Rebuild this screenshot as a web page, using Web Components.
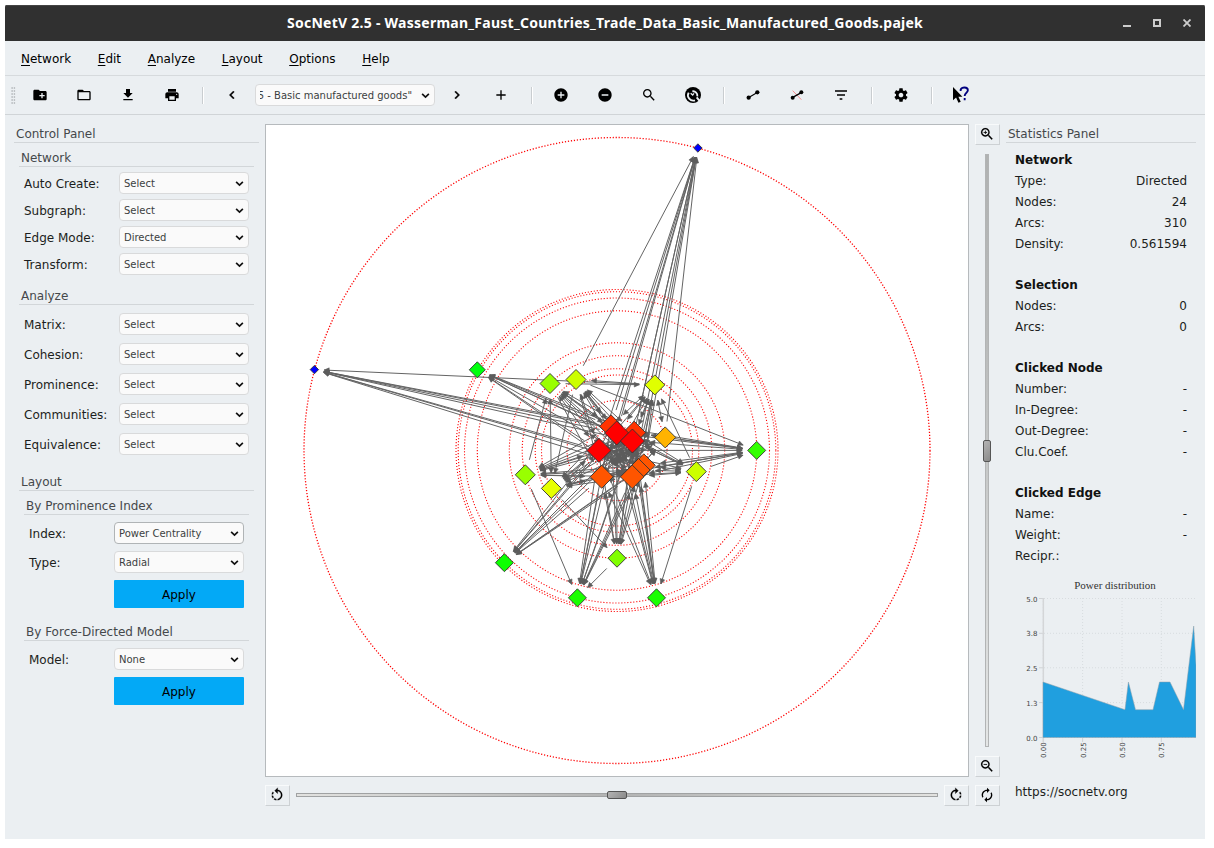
<!DOCTYPE html>
<html lang="en">
<head>
<meta charset="utf-8">
<title>SocNetV 2.5</title>
<style>
html,body{margin:0;background:#fff;}
body{padding:5px;width:1200px;font:12px "DejaVu Sans",sans-serif;color:#1c1e20;}
</style>
</head>
<body>
<snv-window></snv-window>
<script>
const define = (name, html, setup) => customElements.define(name, class extends HTMLElement {
  connectedCallback() {
    if (this.shadowRoot) return;
    const root = this.attachShadow({mode: 'open'});
    const t = document.createElement('template');
    t.innerHTML = html;
    root.append(t.content.cloneNode(true));
    if (setup) setup(this, root);
  }
});

const ICONS = {
  newfolder: '<path d="M20 6h-8l-2-2H4c-1.1 0-2 .9-2 2v12c0 1.1.9 2 2 2h16c1.1 0 2-.9 2-2V8c0-1.1-.9-2-2-2zm-1 8h-3v3h-2v-3h-3v-2h3V9h2v3h3v2z"/>',
  folder: '<path d="M20 6h-8l-2-2H4c-1.1 0-2 .9-2 2v12c0 1.1.9 2 2 2h16c1.1 0 2-.9 2-2V8c0-1.1-.9-2-2-2zm0 12H4V8h16v10z"/>',
  download: '<path d="M19 9h-4V3H9v6H5l7 7 7-7zM5 18v2h14v-2H5z"/>',
  print: '<path d="M19 8H5c-1.66 0-3 1.34-3 3v6h4v4h12v-4h4v-6c0-1.66-1.34-3-3-3zm-3 11H8v-5h8v5zm3-7c-.55 0-1-.45-1-1s.45-1 1-1 1 .45 1 1-.45 1-1 1zm-1-9H6v4h12V3z"/>',
  left: '<path d="M15.41 7.41L14 6l-6 6 6 6 1.41-1.41L10.83 12z" stroke="#000" stroke-width=".6"/>',
  right: '<path d="M10 6L8.59 7.41 13.17 12l-4.58 4.59L10 18l6-6z" stroke="#000" stroke-width=".6"/>',
  plus: '<path d="M19 13h-6v6h-2v-6H5v-2h6V5h2v6h6v2z"/>',
  addc: '<path d="M12 2C6.48 2 2 6.48 2 12s4.48 10 10 10 10-4.48 10-10S17.52 2 12 2zm5 11h-4v4h-2v-4H7v-2h4V7h2v4h4v2z"/>',
  remc: '<path d="M12 2C6.48 2 2 6.48 2 12s4.48 10 10 10 10-4.48 10-10S17.52 2 12 2zm5 11H7v-2h10v2z"/>',
  search: '<path d="M15.5 14h-.79l-.28-.27C15.41 12.59 16 11.11 16 9.5 16 5.91 13.09 3 9.5 3S3 5.91 3 9.5 5.91 16 9.5 16c1.61 0 3.09-.59 4.23-1.57l.27.28v.79l5 4.99L20.49 19l-4.99-5zm-6 0C7.01 14 5 11.99 5 9.5S7.01 5 9.5 5 14 7.01 14 9.5 11.99 14 9.5 14z"/>',
  wrench: '<circle cx="12" cy="12" r="12"/><path d="M15 20A8 8 0 0 1 5.500 8.500M11 6.500A6.500 6.500 0 0 1 18.500 14M17.500 15.500L22.500 21.500" fill="none" stroke="#ebeff2" stroke-width="2.800"/><path d="M8.500 9.500l3 2.500 2-2.500" fill="none" stroke="#ebeff2" stroke-width="2"/>',
  edge: '<circle cx="5.500" cy="16" r="3.200"/><circle cx="18.500" cy="8" r="3.200"/><path d="M5 16L19 8" stroke="#000" stroke-width="1.800"/>',
  noedge: '<path d="M5.500 5.500L18.500 19" stroke="#f33" stroke-width=".8"/><circle cx="5.500" cy="16" r="3"/><circle cx="18.500" cy="8" r="3"/><path d="M5 16L19 8" stroke="#000" stroke-width="1.900"/>',
  filter: '<path d="M3 5h18v2H3zM6 11h12v2H6zM10 17h4v2h-4z"/>',
  gear: '<path d="M19.430 12.980c.04-.32.07-.64.07-.98s-.03-.66-.07-.98l2.110-1.650c.19-.15.24-.42.12-.64l-2-3.460c-.12-.22-.39-.3-.61-.22l-2.490 1c-.52-.4-1.080-.73-1.690-.98l-.38-2.650C14.460 2.180 14.250 2 14 2h-4c-.25 0-.46.18-.49.42l-.38 2.650c-.61.25-1.170.59-1.690.98l-2.490-1c-.23-.09-.49 0-.61.22l-2 3.460c-.13.22-.07.49.12.64l2.110 1.650c-.04.32-.07.65-.07.98s.03.66.07.98l-2.110 1.650c-.19.15-.24.42-.12.64l2 3.460c.12.22.39.3.61.22l2.490-1c.52.4 1.080.73 1.690.98l.38 2.650c.03.24.24.42.49.42h4c.25 0 .46-.18.49-.42l.38-2.650c.61-.25 1.170-.59 1.690-.98l2.490 1c.23.09.49 0 .61-.22l2-3.460c.12-.22.07-.49-.12-.64l-2.110-1.650zM12 15.500c-1.930 0-3.500-1.570-3.500-3.500s1.570-3.500 3.500-3.500 3.500 1.570 3.500 3.500-1.570 3.500-3.500 3.500z"/>',
  help: '<path d="M0 0v20l4.600-4.400L8.200 23.500l3.400-1.500-3.500-7.500h6z"/><path d="M11.500 6V3.800C12.500 1.500 15 .8 17.300 .8c3 0 5 1.500 5 4.200 0 3.800-4.800 3.500-4.800 8.500M17.500 16.500v3.500" fill="none" stroke="#00007f" stroke-width="2.800"/>',
  zoomin: '<path d="M15.500 14h-.79l-.28-.27C15.410 12.590 16 11.110 16 9.500 16 5.910 13.090 3 9.500 3S3 5.910 3 9.500 5.910 16 9.500 16c1.610 0 3.090-.59 4.230-1.570l.27.28v.79l5 4.990L20.490 19l-4.990-5zm-6 0C7.010 14 5 11.990 5 9.500S7.010 5 9.500 5 14 7.010 14 9.500 11.990 14 9.500 14zM12 10h-2v2H9v-2H7V9h2V7h1v2h2v1z" stroke="#000" stroke-width=".2"/>',
  zoomout: '<path d="M15.500 14h-.79l-.28-.27C15.410 12.590 16 11.110 16 9.500 16 5.910 13.090 3 9.500 3S3 5.910 3 9.500 5.910 16 9.500 16c1.610 0 3.090-.59 4.230-1.570l.27.28v.79l5 4.990L20.490 19l-4.990-5zm-6 0C7.010 14 5 11.990 5 9.500S7.010 5 9.500 5 14 7.010 14 9.500 11.990 14 9.500 14zM7 9h5v1H7z" stroke="#000" stroke-width=".2"/>',
  rotr: '<path d="M15.550 5.550L11 1v3.070C7.060 4.560 4 7.920 4 12s3.050 7.440 7 7.930v-2.020c-2.840-.48-5-2.940-5-5.910s2.160-5.430 5-5.910V10l4.550-4.450zM19.930 11c-.17-1.390-.72-2.730-1.620-3.890l-1.420 1.420c.54.75.88 1.600 1.020 2.470h2.020zM13 17.900v2.020c1.390-.17 2.740-.71 3.900-1.610l-1.440-1.440c-.75.54-1.590.89-2.460 1.030zm3.890-2.420l1.420 1.410c.9-1.160 1.450-2.500 1.620-3.890h-2.020c-.14.87-.48 1.720-1.020 2.480z" stroke="#000" stroke-width=".3"/>',
  sync: '<path d="M12 6v3l4-4-4-4v3c-4.420 0-8 3.580-8 8 0 1.570.46 3.030 1.240 4.260L6.700 14.800c-.45-.83-.7-1.790-.7-2.800 0-3.310 2.690-6 6-6zm6.760 1.740L17.300 9.200c.44.84.7 1.790.7 2.800 0 3.310-2.690 6-6 6v-3l-4 4 4 4v-3c4.420 0 8-3.580 8-8 0-1.570-.46-3.030-1.240-4.260z"/>',
  down: '<path d="M3 7.500L12 16l9-8.500" fill="none" stroke="#111" stroke-width="4.500"/>'
};
ICONS.rotl = '<g transform="matrix(-1 0 0 1 24 0)">' + ICONS.rotr + '</g>';

define('snv-icon', `<style>:host{display:block;line-height:0;width:var(--s,16px);height:var(--s,16px)}svg{width:100%;height:100%;overflow:visible}</style><svg viewBox="0 0 24 24"></svg>`,
  (el, r) => { r.querySelector('svg').innerHTML = ICONS[el.getAttribute('name')]; });

define('snv-titlebar', `<style>
:host{display:grid;grid-template-columns:1fr auto 1fr;align-items:center;height:36px;background:#303030;color:#fff;border-radius:2px 2px 0 0;box-shadow:inset 0 1px #444}
b{grid-column:2;font:bold 14px/36px "Noto Sans",sans-serif;white-space:nowrap;letter-spacing:.26px}
div{justify-self:end;display:flex;gap:22px;margin-right:14px}
svg{width:8px;height:8px;display:block}
</style><b>SocNetV 2.5 - Wasserman_Faust_Countries_Trade_Data_Basic_Manufactured_Goods.pajek</b>
<div><svg><path d="M0 7h8" stroke="#ccc" stroke-width="2"/></svg><svg><path d="M1 1h6v6H1z" stroke="#ccc" fill="none" stroke-width="2"/></svg><svg><path d="M.5.5l7 7M7.500.5l-7 7" stroke="#ccc" stroke-width="1.800"/></svg></div>`);

define('snv-menubar', `<style>
:host{display:flex;height:34px;border-bottom:1px solid #d6dadd;padding-left:16px;gap:26.700px;line-height:36px;color:#000}
u{text-underline-offset:2px;text-decoration-thickness:1px}
</style><span><u>N</u>etwork</span><span><u>E</u>dit</span><span><u>A</u>nalyze</span><span><u>L</u>ayout</span><span><u>O</u>ptions</span><span><u>H</u>elp</span>`);

define('snv-tool', `<style>:host{width:44px;height:38px;display:flex;align-items:center;justify-content:center;flex:none}</style><snv-icon></snv-icon>`,
  (el, r) => r.querySelector('snv-icon').replaceWith(Object.assign(document.createElement('template'), {innerHTML: `<snv-icon name="${el.getAttribute('name')}"></snv-icon>`}).content));

define('snv-combo', `<style>
:host{display:flex;align-items:center;justify-content:space-between;box-sizing:border-box;height:22px;border:1px solid #d9dadb;border-radius:4px;background:#fafafa;color:#3c3f41;font-size:10px;line-height:20px;padding:0 4px}
:host([active]){border-color:#b0b4b6}
div{overflow:hidden;white-space:nowrap;flex:1;display:flex;padding-top:1px}
:host([clip]) div{justify-content:flex-end}
snv-icon{--s:9px;flex:none}
:host([clip]) snv-icon{margin-left:9px}
</style><div><slot></slot></div><snv-icon name="down"></snv-icon>`);

define('snv-toolbar', `<style>
:host{display:flex;height:38px;align-items:center;border-bottom:1px solid #d0d4d7}
.grip{width:5px;height:17px;margin:0 2px 0 6px;background:radial-gradient(circle at 1px 1px,#b5b9bc .6px,transparent .9px) 0 0/2.500px 3px}
i{width:16px;height:17px;background:linear-gradient(#c9cdd0,#c9cdd0) 8px 0/1px 100% no-repeat,linear-gradient(#fff,#fff) 9px 0/1px 100% no-repeat}
snv-combo{width:180px;margin-left:1px}
</style><span class="grip"></span>
<snv-tool name="newfolder"></snv-tool><snv-tool name="folder"></snv-tool><snv-tool name="download"></snv-tool><snv-tool name="print"></snv-tool><i></i>
<snv-tool name="left"></snv-tool><snv-combo clip>5 - Basic manufactured goods"</snv-combo><snv-tool name="right"></snv-tool><snv-tool name="plus"></snv-tool><i></i>
<snv-tool name="addc"></snv-tool><snv-tool name="remc"></snv-tool><snv-tool name="search"></snv-tool><snv-tool name="wrench"></snv-tool><i></i>
<snv-tool name="edge"></snv-tool><snv-tool name="noedge"></snv-tool><snv-tool name="filter"></snv-tool><i></i>
<snv-tool name="gear"></snv-tool><i></i><snv-tool name="help"></snv-tool>`);

define('snv-heading', `<style>:host{display:block;height:17px;line-height:18px;border-bottom:1px solid #d2d6d9;padding-left:2px;color:#45484b}</style><slot></slot>`);

define('snv-field', `<style>:host{display:grid;grid-template:22px/1fr 130px;height:22px;line-height:24px}</style><span></span><snv-combo><slot></slot></snv-combo>`,
  (el, r) => { r.querySelector('span').textContent = el.getAttribute('label'); if (el.hasAttribute('active')) r.querySelector('snv-combo').setAttribute('active', ''); });

define('snv-button', `<style>:host{display:block;width:130px;height:28px;line-height:30px;text-align:center;background:#03a9f6;border-radius:1px;color:#000;align-self:flex-end}</style><slot></slot>`);

define('snv-control-panel', `<style>
:host{display:block;padding:10px 6px 0 9px}
.g{margin:6px 5px 0}
.rows{display:flex;flex-direction:column;gap:5px;padding:5px 5px 0}
.a{padding-top:8px;gap:8px}
.l{padding-top:7px;gap:7px}
</style><snv-heading>Control Panel</snv-heading>
<div class="g"><snv-heading>Network</snv-heading><div class="rows">
<snv-field label="Auto Create:">Select</snv-field><snv-field label="Subgraph:">Select</snv-field><snv-field label="Edge Mode:">Directed</snv-field><snv-field label="Transform:">Select</snv-field></div></div>
<div class="g" style="margin-top:12px"><snv-heading>Analyze</snv-heading><div class="rows a">
<snv-field label="Matrix:">Select</snv-field><snv-field label="Cohesion:">Select</snv-field><snv-field label="Prominence:">Select</snv-field><snv-field label="Communities:">Select</snv-field><snv-field label="Equivalence:">Select</snv-field></div></div>
<div class="g" style="margin-top:18px"><snv-heading>Layout</snv-heading>
<div class="g"><snv-heading>By Prominence Index</snv-heading><div class="rows l"><snv-field label="Index:" active>Power Centrality</snv-field><snv-field label="Type:">Radial</snv-field><snv-button>Apply</snv-button></div></div>
<div class="g" style="margin-top:15px"><snv-heading>By Force-Directed Model</snv-heading><div class="rows l"><snv-field label="Model:">None</snv-field><snv-button>Apply</snv-button></div></div></div>`);

define('snv-graph', `<style>:host{display:block;box-sizing:border-box;width:704px;height:653px;border:1px solid #b6babd;background:#fff}svg{display:block}</style><svg width="702" height="651" viewBox="266 125 702 651"></svg>`, (el, r) => {
  const nodes = {
    b1:[697.9,148,4.2,'#0000ff'], b2:[314.4,369.6,4.2,'#0000ff'],
    g1:[477.3,369.8,8,'#00ff0d'], g2:[504.4,562.7,9,'#0dff00'], g3:[577.4,597.8,9,'#1aff00'], g4:[656.500,597.8,9,'#1aff00'], g5:[756.700,450.400,9,'#33ff00'],
    l1:[550,383.500,10,'#99ff00'], l2:[525.300,474.800,10,'#99ff00'], l3:[617,558.200,9,'#80ff00'],
    m1:[576,379.500,10,'#ccff00'], m2:[696.300,471.600,10,'#ccff00'],
    y1:[654.800,384.900,10,'#e0ff00'], y2:[551.400,488.400,10,'#e6ff00'],
    o:[665.200,437.400,10.500,'#ffb300'],
    c1:[611,426.300,11.500,'#ff3300'], c2:[616.700,433,12,'#ff0000'], c3:[634.200,432.700,11.500,'#ff3300'], c4:[632.400,441,12,'#ff0000'],
    c5:[599,450.400,12,'#ff0000'], c6:[601.700,476.800,11.500,'#ff5500'], c7:[643.800,465.300,11.500,'#ff5500'], c8:[638.500,470,11.500,'#ff5500'], c9:[632.200,476.800,11.800,'#ff5500']
  };
  const arcs = [];
  const core = ['c1','c2','c3','c4','c5','c6','c7','c8','c9'];
  const add = (to, from) => from.split(' ').forEach(f => arcs.push([f, to]));
  add('b1', 'c1 c2 c3 c4 c5 c6 c7 c8 c9 o m1');
  add('b2', 'c1 c2 c3 c4 c5 c7 c8 y1');
  add('g1', 'c1 c2 c3 c4 c5 c7 c9');
  add('g2', 'c2 c3 c4 c5 c6 c7 c8 c9 c1');
  add('g3', 'c1 c2 c3 c4 c5 c6 c7 c8 c9 l2 l3');
  add('g4', 'c1 c2 c3 c4 c5 c6 c7 c8 c9 m2');
  add('g5', 'c1 c2 c3 c4 c5 c6 c7 c8 c9 o m1 m2');
  add('l1', 'c1 c2 c3 c4 c5 c7 c8 l2 y2');
  add('l2', 'c1 c2 c3 c4 c5 c6 c7 c9 o');
  add('l3', 'c1 c2 c3 c4 c6 c7 c8 c9 y2');
  add('m1', 'c1 c2 c3 c4 c5 c7 c8 c9 y1 l1');
  add('m2', 'c1 c2 c3 c4 c5 c6 c7 c8 c9');
  add('y1', 'c1 c2 c3 c4 c5 c6 c7 c8 c9 o l1 m2');
  add('y2', 'c1 c2 c3 c4 c5 c6 c7 c8 c9 l1 m1 o');
  add('o', 'c1 c2 c3 c4 c5 c6 c7 c8 c9 y1 y2');
  core.forEach(a => { core.forEach(b => { if (a !== b) arcs.push([a, b]); });
    ['g5','l1','l2','m1','m2','y1','y2','l3','g4'].forEach(p => arcs.push([p, a])); });
  const rings = [313, 161, 158.800, 152.500, 139.700, 107.700, 94.800, 81.800, 75.500, 50, 31, 24, 18];
  let s = rings.map(q => `<circle cx="617" cy="450.500" r="${q}" fill="none" stroke="#f00" stroke-width="${q > 300 ? 1.300 : 1.100}" stroke-dasharray="${q > 300 ? '1.200 1.800' : '1.100 1.900'}"/>`).join('');
  const seen = new Set();
  let lines = '', heads = '';
  for (const [f, t] of arcs) {
    const [x1, y1, r1] = nodes[f], [x2, y2, r2] = nodes[t];
    const d = Math.hypot(x2 - x1, y2 - y1), ux = (x2 - x1) / d, uy = (y2 - y1) / d;
    const g1 = r1 + 5.500, g2 = r2 + 5.500;
    if (d < g1 + g2) continue;
    const tx = x2 - ux * g2, ty = y2 - uy * g2;
    const key = [f, t].sort().join();
    if (!seen.has(key)) { seen.add(key); lines += `M${x1 + ux * g1} ${y1 + uy * g1}L${tx} ${ty}`; }
    const bx = tx - ux * 5, by = ty - uy * 5;
    heads += `M${tx} ${ty}L${bx - uy * 2.400} ${by + ux * 2.400}L${bx + uy * 2.400} ${by - ux * 2.400}Z`;
  }
  // short links between the crowded central nodes
  core.forEach((a, i) => core.slice(i + 1).forEach(b => { lines += `M${nodes[a][0]} ${nodes[a][1]}L${nodes[b][0]} ${nodes[b][1]}`; }));
  s += `<path d="${lines}" stroke="#646464" stroke-width="1" fill="none"/><path d="${heads}" fill="#5c5c5c" stroke="#5c5c5c" stroke-width=".6"/>`;
  ['b1','b2','g1','g2','g3','g4','g5','l1','l2','l3','m1','m2','y1','y2','o','c1','c3','c2','c4','c5','c6','c7','c8','c9'].forEach(k => {
    const [x, y, q, c] = nodes[k];
    s += `<path d="M${x} ${y - q}L${x + q} ${y}L${x} ${y + q}L${x - q} ${y}Z" fill="${c}" stroke="#333" stroke-width=".9"/>`;
  });
  r.querySelector('svg').innerHTML = s;
});

define('snv-push', `<style>:host{display:flex;align-items:center;justify-content:center;box-sizing:border-box;width:25px;height:21px;border:1px solid;border-color:#f8fafb #cdd1d4 #cdd1d4 #f8fafb;padding:0 1px 1px 0;flex:none}</style><slot></slot>`);

define('snv-slider', `<style>
:host{display:flex;align-items:center;justify-content:center;box-sizing:border-box;border:1px solid #a0a2a3;height:4px;background:linear-gradient(90deg,#e2e2e0,#b2b3b3 50%,#e2e2e0)}
span{width:18px;height:6px;flex:none;border:1px solid #555;border-radius:2px;background:linear-gradient(135deg,#b4b4b4,#8a8a8a)}
:host([vertical]){width:4px;height:auto;border-color:#b2b4b5;background:linear-gradient(#b0b2b2,#b8baba 30%,#e4e6e6)}
:host([vertical]) span{width:6px;height:20px}
</style><span></span>`);

define('snv-stats', `<style>
:host{display:block;padding:10px 9px 0 0}
.b{padding:7px 9px 0;}
dl{margin:0 0 20px;line-height:21px;display:grid;grid-template-columns:1fr auto}
dl b{grid-column:1/3;color:#111}
dt,dd{margin:0;height:21px}dd{text-align:right}
.b dl:last-child{margin:0}
svg{display:block}
text{font:7px "DejaVu Sans",sans-serif;fill:#444}
.t{font:11px "Liberation Serif",serif;fill:#333}
p{margin:0;padding:15px 9px 0;line-height:14px}
</style><snv-heading>Statistics Panel</snv-heading><div class="b">
<dl><b>Network</b><dt>Type:</dt><dd>Directed</dd><dt>Nodes:</dt><dd>24</dd><dt>Arcs:</dt><dd>310</dd><dt>Density:</dt><dd>0.561594</dd></dl>
<dl><b>Selection</b><dt>Nodes:</dt><dd>0</dd><dt>Arcs:</dt><dd>0</dd></dl>
<dl><b>Clicked Node</b><dt>Number:</dt><dd>-</dd><dt>In-Degree:</dt><dd>-</dd><dt>Out-Degree:</dt><dd>-</dd><dt>Clu.Coef.</dt><dd>-</dd></dl>
<dl><b>Clicked Edge</b><dt>Name:</dt><dd>-</dd><dt>Weight:</dt><dd>-</dd><dt>Recipr.:</dt><dd></dd></dl></div>
<svg width="190" height="203" viewBox="1006 567 190 203"></svg><p>https://socnetv.org</p>`, (el, r) => {
  const ys = [[598.5,'5.0'],[633.3,'3.8'],[667.8,'2.5'],[702.6,'1.3'],[737.5,'0.0']], xs = [[1043.3,'0.00'],[1082.6,'0.25'],[1122,'0.50'],[1161.3,'0.75']];
  let s = '<text class="t" x="1115" y="589" text-anchor="middle">Power distribution</text>';
  ys.forEach(([y, t]) => s += `<path d="M1044 ${y}H1196" stroke="#d8dcdf" stroke-dasharray="1 2"/><path d="M1039 ${y}h4" stroke="#d0d3d5"/><text x="1037.500" y="${y + 3}" text-anchor="end">${t}</text>`);
  xs.forEach(([x, t]) => s += `<path d="M${x} 598V737" stroke="#d8dcdf" stroke-dasharray="1 2"/><path d="M${x} 738v4" stroke="#d0d3d5"/><text transform="translate(${x + 3} 758) rotate(-90)">${t}</text>`);
  s += '<path d="M1043.300 598V742" stroke="#d4d6d8" stroke-width="1.500"/><path d="M1043 737.500V682L1125 709.700L1128.400 682L1135.500 709.700H1153L1159.500 682H1170L1183.500 709.700L1193.700 626L1196 665V737.500Z" fill="#209fdf" stroke="#8f9ea8" stroke-width=".5"/>';
  r.querySelector('svg').innerHTML = s;
});

define('snv-window', `<style>
:host{display:flex;flex-direction:column;width:1200px;height:834px;background:#ebeff2;border-radius:2px 2px 0 0}
main{flex:1;display:grid;grid-template-columns:260px 704px 37px 199px}
.c{padding-top:9px}
.rot{display:flex;align-items:center;gap:6px;padding-top:8px}
.rot snv-slider{flex:1;margin-bottom:1px}
.z{padding:9px 0 0 6px;display:flex;flex-direction:column;width:25px;align-items:center}
.z snv-slider{height:593px;margin:9px 1px 9px 0}
.z snv-push:last-child{margin-top:8px}
</style>
<snv-titlebar></snv-titlebar><snv-menubar></snv-menubar><snv-toolbar></snv-toolbar>
<main><snv-control-panel></snv-control-panel>
<div class="c"><snv-graph></snv-graph><div class="rot"><snv-push><snv-icon name="rotl"></snv-icon></snv-push><snv-slider></snv-slider><snv-push><snv-icon name="rotr"></snv-icon></snv-push></div></div>
<div class="z"><snv-push><snv-icon name="zoomin"></snv-icon></snv-push><snv-slider vertical></snv-slider><snv-push><snv-icon name="zoomout"></snv-icon></snv-push><snv-push><snv-icon name="sync"></snv-icon></snv-push></div>
<snv-stats></snv-stats></main>`);
</script>
</body>
</html>
